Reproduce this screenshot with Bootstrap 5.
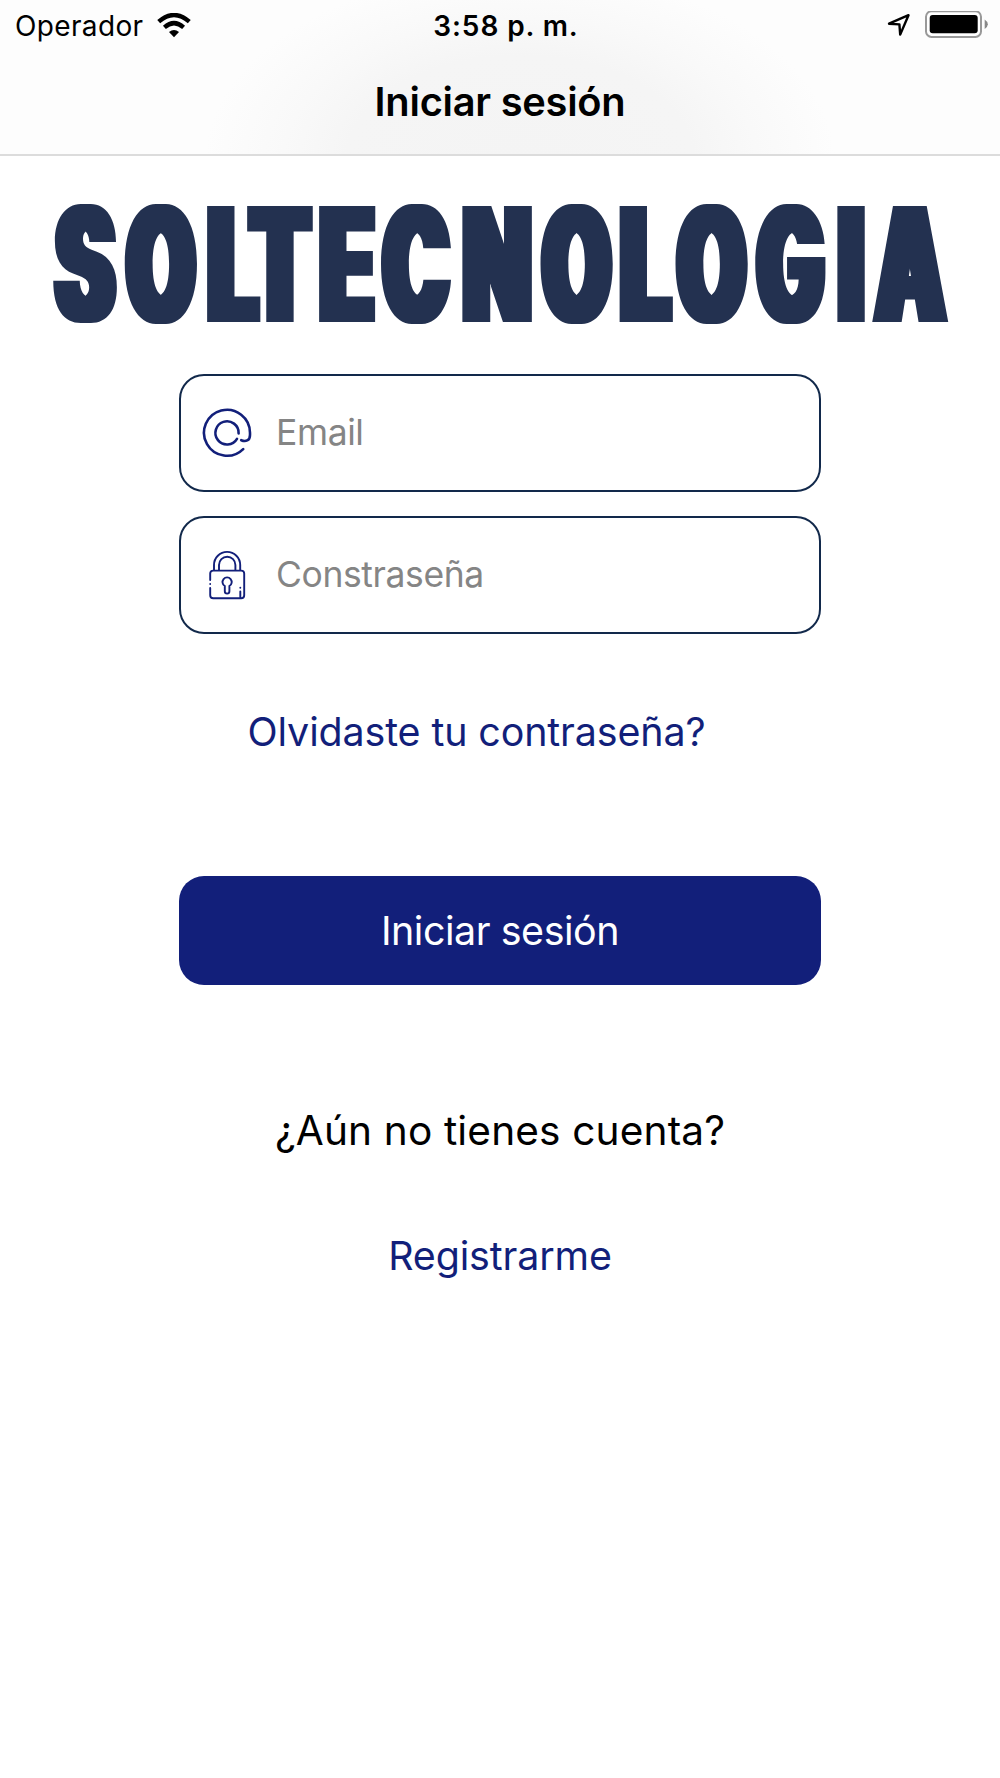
<!DOCTYPE html>
<html lang="es">
<head>
<meta charset="utf-8">
<meta name="viewport" content="width=device-width, initial-scale=1">
<title>Iniciar sesión</title>
<link href="https://cdn.jsdelivr.net/npm/bootstrap@5.3.0/dist/css/bootstrap.min.css" rel="stylesheet">
<style>
  :root { --brand: #121f7a; --ink: #12294b; }
  body { font-family: Inter, sans-serif; background: #fff; color: #000; min-height: 1778px; font-size: 39.4px; line-height: 50px; }
  .top-area { height: 156px; border-bottom: 2px solid #dcdcdc;
    background: radial-gradient(ellipse 315px 190px at 520px 160px, #f4f4f4 0, #f5f5f5 55%, #f9f9f9 75%, #fdfdfd 100%); }
  .status-bar { height: 52px; font-size: 28px; line-height: 52px; padding: 0 12px 0 15px; }
  .status-side { flex: 1 1 0; }
  .carrier { letter-spacing: .35px; margin-right: 14px; }
  .clock { font-weight: 600; letter-spacing: .9px; padding-left: 9px; }
  .page-title { font-size: 39.8px; line-height: 100px; font-weight: 600; letter-spacing: -.25px; }
  .brand-logo { height: 218px; }
  .brand-logo text { font-family: Inter, sans-serif; font-weight: 900; font-size: 160px; fill: #233150; }
  .login-form { width: 642px; }
  .field-box { height: 118px; border: 2px solid var(--ink); border-radius: 25px; padding-left: 19px; gap: 22px; }
  .field-box + .field-box { margin-top: 24px; }
  .field-box .form-control { font-size: 35.5px; padding: 0; color: #000; letter-spacing: -.4px; }
  .field-box .form-control::placeholder { color: #858585; opacity: 1; }
  .plain-link { color: var(--brand); letter-spacing: -.12px; }
  .forgot { margin: 73px 47px 0 0; }
  .btn-enter { --bs-btn-bg: var(--brand); --bs-btn-color: #fff; --bs-btn-hover-bg: #0d1761; --bs-btn-hover-color: #fff;
    height: 109px; margin-top: 119px; border: 0; border-radius: 25px; padding: 8px 0 6px; font-size: 39.4px; letter-spacing: -.45px; }
  .ask { margin-top: 121px; font-size: 40.6px; letter-spacing: .15px; }
  .register { margin-top: 75px; }
</style>
</head>
<body>
<header class="top-area">
  <div class="status-bar d-flex align-items-center">
    <div class="status-side d-flex align-items-center">
      <span class="carrier">Operador</span>
      <svg width="34" height="26" viewBox="157 12 34 26" aria-hidden="true">
        <g fill="none" stroke="#000" stroke-width="4.4">
          <path d="M158.7 20.7 Q174 7.4 189.3 20.7"/>
          <path d="M164.4 26.3 Q174 18 183.6 26.3"/>
        </g>
        <path d="M169 31 Q174 27 179 31 L174 36.3Z"/>
      </svg>
    </div>
    <div class="clock">3:58 p. m.</div>
    <div class="status-side d-flex justify-content-end align-items-center">
      <svg width="102" height="30" viewBox="886 11 102 30" aria-hidden="true">
        <path d="M889 23.7 L908.5 15.2 L900.2 34.6 L899.4 24.4Z" fill="none" stroke="#000" stroke-width="2.4" stroke-linejoin="round"/>
        <rect x="926" y="11.3" width="55" height="25.6" rx="5.5" fill="#fff" stroke="#999" stroke-width="2"/>
        <rect x="929.7" y="15" width="48" height="18.2" rx="3"/>
        <path d="M984.7 19.5 Q991 24 984.7 29Z" fill="#888"/>
      </svg>
    </div>
  </div>
  <h1 class="page-title text-center m-0">Iniciar sesión</h1>
</header>

<main class="d-flex flex-column align-items-center">
  <svg class="brand-logo w-100" viewBox="0 156 1000 218" role="img" aria-label="SOLTECNOLOGIA">
    <defs>
      <filter id="heavy" x="0" y="156" width="1000" height="218" filterUnits="userSpaceOnUse" color-interpolation-filters="sRGB">
        <feMorphology operator="dilate" radius="5 0"/>
      </filter>
    </defs>
    <g filter="url(#heavy)">
      <text transform="scale(.55 1)" y="322.5" text-anchor="middle" x="154.8 292.7 423.5 509.2 631 756.4 903.7 1048.2 1173.5 1293.7 1437.3 1547.3 1655">SOLTECNOLOGIA</text>
    </g>
  </svg>

  <form class="login-form d-flex flex-column align-items-center">
    <label class="field-box d-flex align-items-center w-100">
      <svg class="flex-shrink-0" width="54" height="54" viewBox="200 405.6 54 54" fill="none" stroke="#121f7a" stroke-width="2.6" stroke-linecap="round" aria-hidden="true">
        <path d="M243.2 448.7 A23 23 0 1 1 250 432.6 V434.5 C250 440.5 245.5 441.5 241.2 439.8"/>
        <path d="M238.6 433 A11.6 11.6 0 1 0 237 438.4"/>
      </svg>
      <input type="email" class="form-control border-0 shadow-none bg-transparent" placeholder="Email">
    </label>
    <label class="field-box d-flex align-items-center w-100">
      <svg class="flex-shrink-0" width="54" height="54" viewBox="200 548 54 54" fill="none" stroke="#121f7a" stroke-width="1.9" stroke-linecap="round" aria-hidden="true">
        <path d="M214 570 V565 A13.1 13.1 0 0 1 240.2 565 V570 M219 570 V565 A8.2 8.2 0 0 1 235.4 565 V570"/>
        <path d="M210.2 580 V573.6 Q210.2 570.6 213.2 570.6 H241.2 Q244.2 570.6 244.2 573.6 V595.2 Q244.2 598.2 241.2 598.2 H213.2 Q210.2 598.2 210.2 595.2 V588 M210.2 584 V584.1"/>
        <path d="M240.3 591.5 V597.5 M240.3 587.7 V587.8"/>
        <path d="M224.8 586 A4.6 4.6 0 1 1 229.4 586 V591.3 A2.3 2.3 0 0 1 224.8 591.3Z"/>
      </svg>
      <input type="password" class="form-control border-0 shadow-none bg-transparent" placeholder="Constraseña">
    </label>
    <a href="#" class="plain-link forgot text-decoration-none">Olvidaste tu contraseña?</a>
    <button type="button" class="btn btn-enter w-100">Iniciar sesión</button>
  </form>

  <p class="ask mb-0">¿Aún no tienes cuenta?</p>
  <a href="#" class="plain-link register text-decoration-none">Registrarme</a>
</main>
<script src="https://cdn.jsdelivr.net/npm/bootstrap@5.3.0/dist/js/bootstrap.bundle.min.js"></script>
</body>
</html>
